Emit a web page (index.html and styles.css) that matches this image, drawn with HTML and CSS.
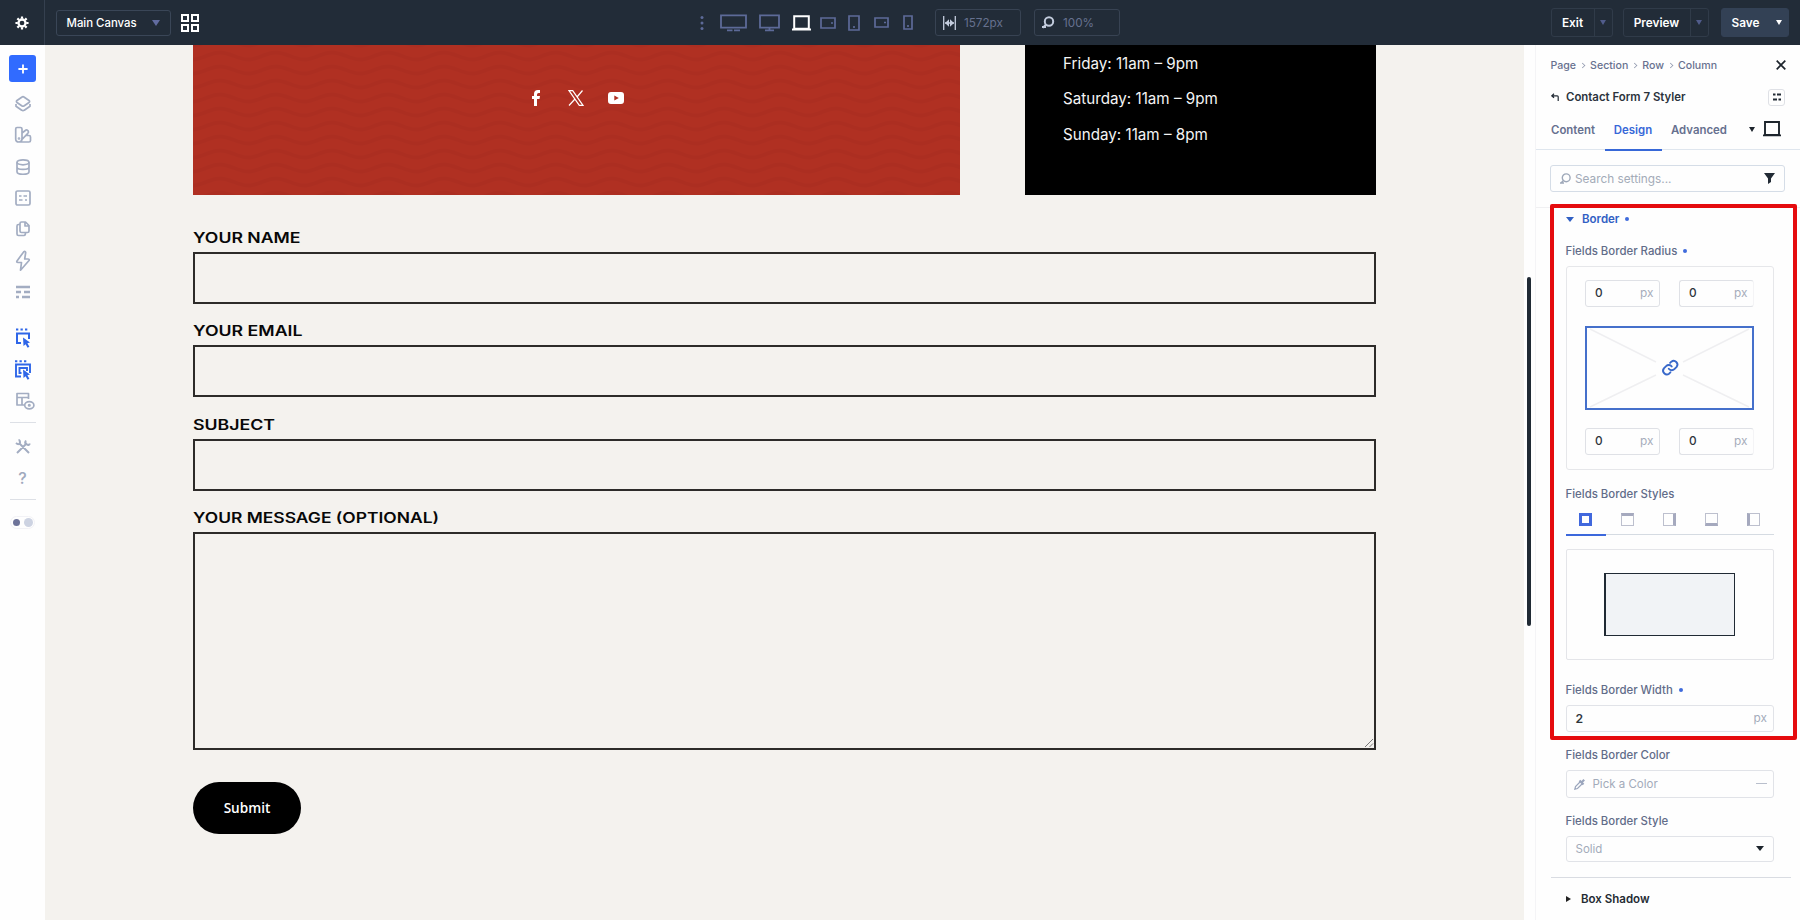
FILE: index.html
```html
<!DOCTYPE html>
<html lang="en">
<head>
<meta charset="utf-8">
<title>Contact Form 7 Styler</title>
<link rel="stylesheet" href="styles.css">
</head>
<body>
<div class="app">
<header class="topbar">
  <div class="gear"><svg width="14" height="14" viewBox="0 0 16 16"><circle cx="8" cy="8" r="4" fill="none" stroke="#fff" stroke-width="2.6"/><path d="M8 .5v2.700M8 12.800v2.700M.5 8h2.700M12.800 8h2.700M2.700 2.700l1.900 1.900M11.400 11.400l1.900 1.900M13.300 2.700l-1.900 1.900M4.600 11.400l-1.900 1.900" stroke="#fff" stroke-width="2.500"/></svg></div>
  <div class="canvas-select"><span>Main Canvas</span><i class="tri tri-dim"></i></div>
  <svg class="grid-icon" width="18" height="18" viewBox="0 0 18 18" fill="none" stroke="#fff" stroke-width="2"><path d="M1 1h6v6H1zM11 1h6v6h-6zM1 11h6v6H1zM11 11h6v6h-6z"/></svg>
  <div class="devices">
    <svg width="4" height="16" viewBox="0 0 4 16" fill="#5d6a98"><circle cx="2" cy="2.5" r="1.5"/><circle cx="2" cy="8" r="1.5"/><circle cx="2" cy="13.5" r="1.5"/></svg>
    <svg class="d1" width="27" height="18" viewBox="0 0 27 18" fill="none" stroke="#5d6a98" stroke-width="1.8"><path d="M1 1.4h25v12.200H1zM7 16.400h5.500M14 16.400h6"/></svg>
    <svg class="d2" width="21" height="18" viewBox="0 0 21 18" fill="none" stroke="#5d6a98" stroke-width="1.8"><path d="M1 1.400h19v12.200H1zM6 16.400h9M10.500 13v3"/></svg>
    <svg class="d3" width="19" height="18" viewBox="0 0 19 18" fill="none" stroke="#fff" stroke-width="2"><path d="M2.200 2.200h14.600v12.500H2.200zM0 15.600h19"/></svg>
    <svg class="d4" width="16" height="12" viewBox="0 0 16 12" fill="none" stroke="#5d6a98" stroke-width="1.700"><path d="M1 1h14v10H1z"/><path d="M11 6h2"/></svg>
    <svg class="d5" width="12" height="16" viewBox="0 0 12 16" fill="none" stroke="#5d6a98" stroke-width="1.700"><path d="M1 1h10v14H1z"/><path d="M6 11v2"/></svg>
    <svg class="d6" width="15" height="11" viewBox="0 0 15 11" fill="none" stroke="#5d6a98" stroke-width="1.700"><path d="M1 1h13v9H1z"/><path d="M10 5.500h2"/></svg>
    <svg class="d7" width="10" height="15" viewBox="0 0 10 15" fill="none" stroke="#5d6a98" stroke-width="1.700"><path d="M1 1h8v13H1z"/><path d="M5 10v2"/></svg>
  </div>
  <div class="metric"><svg width="13" height="14" viewBox="0 0 13 14" stroke="#c3ccdd" fill="none" stroke-width="1.300"><path d="M.7 0v14M12.300 0v14M2 7h9"/><path d="M2 7l4-3.800v7.600zM11 7L7 3.200v7.600z" fill="#c3ccdd" stroke="none"/></svg><span>1572px</span></div>
  <div class="metric zoom"><svg width="13" height="13" viewBox="0 0 13 13" stroke="#c3ccdd" fill="none" stroke-width="2"><circle cx="7" cy="5.500" r="4.200"/><path d="M4 8.500L1 11.700M0 11h4"/></svg><span>100%</span></div>
  <div class="actions">
    <div class="btn exit"><span>Exit</span><b><i class="tri tri-sm"></i></b></div>
    <div class="btn preview"><span>Preview</span><b><i class="tri tri-sm"></i></b></div>
    <div class="btn save"><span>Save</span><b><i class="tri tri-sm"></i></b></div>
  </div>
</header>
<nav class="sidebar">
  <div class="add"><svg width="10" height="10" viewBox="0 0 10 10"><path d="M5 0.400v9.200M.4 5h9.200" stroke="#fff" stroke-width="1.800"/></svg></div>
  <div class="tool"><svg width="18" height="18" viewBox="0 0 18 18"><path d="M9 1.700Q9.600 1.700 10.300 2.200L15 5.500Q16.200 6.500 15 7.500L10.300 10.700Q9 11.500 7.700 10.700L3 7.500Q1.800 6.500 3 5.500L7.700 2.200Q8.400 1.700 9 1.700zM2 9v2.200L7.700 15.200Q9 16.200 10.300 15.200L16 11.200V9"/></svg></div>
  <div class="tool"><svg width="18" height="18" viewBox="0 0 18 18"><path d="M3 1.500h3.500Q8 1.500 8 3v9.500Q8 16 5 16 1.700 16 1.700 13V3Q1.700 1.500 3 1.500zM8 7l4-3q1.300-.5 2.200 1 .8 1.300-.4 2.300L7 14.500M11.500 9.500H15q1.500 0 1.500 1.600V14.500q0 1.500-1.500 1.500H5"/><circle cx="5" cy="12.500" r=".5"/></svg></div>
  <div class="tool"><svg width="18" height="18" viewBox="0 0 18 18"><ellipse cx="9" cy="4.300" rx="6" ry="2.500"/><path d="M3 4.300v9.400c0 3.400 12 3.400 12 0V4.300M3 9c0 3.200 12 3.200 12 0"/></svg></div>
  <div class="tool"><svg width="18" height="18" viewBox="0 0 18 18"><rect x="2" y="2" width="14" height="14" rx="1.500"/><path d="M5 7h2.500M9.500 7H13M5 11h3.500M11 11h2"/></svg></div>
  <div class="tool"><svg width="18" height="18" viewBox="0 0 18 18"><path d="M7.500 2h4L15 5.500V11q0 1.500-1.500 1.500h-6Q6 12.500 6 11V3.500Q6 2 7.500 2zM11 2v4h4M6 4.500H4.500Q3 4.500 3 6v8q0 1.500 1.500 1.500h5.500q1.500 0 1.500-3"/></svg></div>
  <div class="tool"><svg width="18" height="22" viewBox="0 0 18 22"><path d="M9.800 1.700L3 11q-.8 1.500 1 1.500h3.500L6.500 20.200 15 10.500q.8-1.500-1-1.500h-3.300l1-6.500q-.5-1.600-1.900-.8z"/></svg></div>
  <div class="tool"><svg width="14" height="14" viewBox="0 0 14 14"><path stroke-width="2.600" d="M0 2h14M0 7h5M8 7h6M0 12h3M6 12h8"/></svg></div>
  <div class="tool blue first"><svg width="18" height="20" viewBox="0 0 18 20"><path stroke-width="2" d="M2 1.500h2.300M6.500 1.500h2.300M11 1.500h2.300M7 15H3V5.500h12V11"/><path stroke="none" fill="#2f66e8" d="M9 9.500l7 5-2.600.8 2 3.500-1.800 1-2-3.600L9.500 18z"/></svg></div>
  <div class="tool blue"><svg width="18" height="20" viewBox="0 0 18 20"><path stroke-width="1.900" d="M1 1.200h2.300M5.500 1.200h2.300M10 1.200h2.300M7 16.500H2V4.500h14V13M7.500 13H5.500V8h7.500v3"/><path stroke="none" fill="#2f66e8" d="M9 9.500l7 5-2.600.8 2 3.500-1.800 1-2-3.600L9.500 18z"/></svg></div>
  <div class="tool wire"><svg width="20" height="18" viewBox="0 0 20 18"><path d="M9 13H2V1.500h11.500V7M2 5.500h11.500M7 5.500V13"/><ellipse cx="14.300" cy="13.200" rx="4.600" ry="3.600"/><circle cx="14.300" cy="13.200" r=".7"/></svg></div>
  <hr class="rule">
  <div class="tool tools"><svg width="16" height="16" viewBox="0 0 16 16"><path stroke-width="2" d="M2 14L12 4M4.500 4.500L14 14M11 1.500q-2 3 .5 3.700Q14 7 14.800 4.500M1 4q3 2.500 4-.5Q5 1 3.500 1"/></svg></div>
  <div class="tool help">?</div>
  <hr class="rule">
  <div class="toggle"><i></i><i></i></div>
</nav>
<main class="stage">
  <section class="hero">
    <div class="social">
      <svg class="waves" width="767" height="150"><defs><pattern id="wave" x="13" y="4" width="56" height="14" patternUnits="userSpaceOnUse"><path d="M-14-3.500C-4-3.500 4-10.500 14-10.500S32-3.500 42-3.500 60-10.500 70-10.500M-14 10.500C-4 10.500 4 3.500 14 3.500S32 10.500 42 10.500 60 3.500 70 3.500M-14 24.500C-4 24.500 4 17.500 14 17.500S32 24.500 42 24.500 60 17.500 70 17.500" fill="none" stroke="#a52c20" stroke-width="4"/></pattern></defs><rect width="767" height="150" fill="url(#wave)" opacity=".38"/></svg>
      <div class="socials">
        <svg width="16" height="16" viewBox="0 0 16 16"><path fill="#fff" d="M6 16V9H4V6h2V4q0-4 4-4h2v3h-1.500Q9 3 9 4.500V6h3l-.5 3H9v7z"/></svg>
        <svg width="16" height="16" viewBox="0 0 16 16" fill="none" stroke="#fff" stroke-width="1.200"><path d="M1 .7h3.700L15 15.300h-3.700zM14.500.5L9 7M7 9l-6 6.500"/></svg>
        <svg width="16" height="16" viewBox="0 0 16 16"><path fill="#fff" fill-rule="evenodd" d="M3 2h10q3 0 3 3v6q0 3-3 3H3q-3 0-3-3V5q0-3 3-3zm3.300 3.500v5L10.800 8z"/></svg>
      </div>
    </div>
    <div class="hours"><p>Friday: 11am – 9pm</p><p>Saturday: 11am – 9pm</p><p>Sunday: 11am – 8pm</p></div>
  </section>
  <form class="form">
    <label class="field"><svg class="cap" width="300" height="18"><text x="0" y="13.200" textLength="107.500" lengthAdjust="spacingAndGlyphs">YOUR NAME</text></svg><span class="input"></span></label>
    <label class="field"><svg class="cap" width="300" height="18"><text x="0" y="13.200" textLength="109.500" lengthAdjust="spacingAndGlyphs">YOUR EMAIL</text></svg><span class="input"></span></label>
    <label class="field"><svg class="cap" width="300" height="18"><text x="0" y="13.200" textLength="82" lengthAdjust="spacingAndGlyphs">SUBJECT</text></svg><span class="input"></span></label>
    <label class="field"><svg class="cap" width="300" height="18"><text x="0" y="13.200" textLength="246" lengthAdjust="spacingAndGlyphs">YOUR MESSAGE (OPTIONAL)</text></svg><span class="input area"><svg width="10" height="10" viewBox="0 0 10 10" stroke="#777" fill="none"><path d="M1 9l8-8M5.500 9L9 5.500"/></svg></span></label>
    <div class="submit">Submit</div>
  </form>
</main>
<aside class="panel">
  <div class="scroll"></div>
  <div class="inner">
    <div class="crumbs"><span>Page</span><em></em><span>Section</span><em></em><span>Row</span><em></em><span>Column</span><svg class="close" width="10" height="10" viewBox="0 0 10 10"><path d="M.7.7l8.600 8.600M9.300.7L.7 9.300" stroke="#1d242c" stroke-width="1.700"/></svg></div>
    <div class="title"><svg width="9" height="9" viewBox="0 0 9 9"><path d="M3 .8L.8 2.800 3 4.800M1 2.800h5.200q1 0 1 1V8" fill="none" stroke="#222b35" stroke-width="1.200"/></svg><span>Contact Form 7 Styler</span><div class="preset"><svg width="8" height="8" viewBox="0 0 8 8"><path d="M0 1.500h2.500M4 1.500h4M0 6.500h4M5.500 6.500H8" stroke="#222b35" stroke-width="1.800"/></svg></div></div>
    <div class="tabs"><span class="t1">Content</span><span class="t2">Design</span><span class="t3">Advanced</span><i class="tri dark"></i><svg width="18" height="16" viewBox="0 0 18 16" fill="none" stroke="#1d242c" stroke-width="1.900"><path d="M2 1h14v13H2zM0 14.400h18"/></svg></div>
    <div class="search"><svg width="11" height="11" viewBox="0 0 11 11" fill="none" stroke="#9ea8b9" stroke-width="1.400"><circle cx="6.200" cy="4.800" r="3.900"/><path d="M3.500 7.500L.7 10.300M0 10h4"/></svg><span>Search settings...</span><svg class="funnel" width="11" height="11" viewBox="0 0 11 11"><path d="M0 0h11L7 5.500V9L4 11V5.500z" fill="#222b35"/></svg></div>
    <div class="group">
      <div class="head"><i class="tri bluetri"></i><span>Border</span><u></u></div>
      <div class="lab l1">Fields Border Radius<u></u></div>
      <div class="radius">
        <div class="pair"><div class="num"><b>0</b><span>px</span></div><div class="num right"><b>0</b><span>px</span></div></div>
        <div class="link"><svg width="165" height="80" viewBox="0 0 165 80" fill="none"><path d="M3 1l66 33M162 1L96 34M3 79l66-32M162 79L96 47" stroke="#efeff1" stroke-width="1.400"/><g stroke="#3868ca" stroke-width="2.500" stroke-linecap="round" transform="translate(75 31) scale(.75)"><path d="M9 13a5 5 0 0 0 7.500.5l3-3a5 5 0 0 0-7-7l-1.700 1.700M13 10a5 5 0 0 0-7.500-.5l-3 3a5 5 0 0 0 7 7l1.700-1.700"/></g></svg></div>
        <div class="pair"><div class="num"><b>0</b><span>px</span></div><div class="num right"><b>0</b><span>px</span></div></div>
      </div>
      <div class="lab l2">Fields Border Styles</div>
      <div class="sides">
        <span class="on"><i class="all"></i></span><span><i class="top"></i></span><span><i class="rgt"></i></span><span><i class="bot"></i></span><span><i class="lft"></i></span>
      </div>
      <div class="swatch"><div></div></div>
      <div class="lab l3">Fields Border Width<u></u></div>
      <div class="row w"><b>2</b><span>px</span></div>
      <div class="lab l4">Fields Border Color</div>
      <div class="row c"><svg width="12" height="12" viewBox="0 0 12 12" fill="none" stroke="#9ba6bd" stroke-width="1.200"><path d="M6.500 3.500L1.500 8.500.8 11.200l2.700-.7 5-5"/><path d="M5.500 2.500l4 4M8 4l2.200-2.200" stroke-width="2.200"/></svg><em>Pick a Color</em><i class="dash"></i></div>
      <div class="lab l5">Fields Border Style</div>
      <div class="row s"><em>Solid</em><i class="tri dark big"></i></div>
    </div>
    <div class="head shadow"><i class="rtri"></i><span>Box Shadow</span></div>
  </div>
  <div class="callout"></div>
</aside>
</div>
</body>
</html>
```
FILE: styles.css
```css
* { box-sizing: border-box; }
body { margin: 0; font-family: Inter, "Liberation Sans", sans-serif; font-size: 12px; }
svg { display: block; flex: none; }
p { margin: 0; }
i, em { font-style: normal; }
u { text-decoration: none; }
.app { width: 1800px; height: 920px; overflow: hidden; display: grid; grid-template: 45px 875px / 45px 1479px 276px; background: #fefefe; }

.topbar { grid-column: 1 / 4; background: #222c38; display: flex; align-items: center; color: #fff; font-weight: 600; }
.gear { width: 45px; height: 45px; display: flex; align-items: center; justify-content: center; border-right: 1px solid #35404f; }
.canvas-select { width: 115px; height: 26px; margin-left: 11px; padding: 0 10px 0 9.500px; border: 1px solid #3a4657; border-radius: 3px; display: flex; align-items: center; justify-content: space-between; font-size: 11.400px; font-weight: 500; }
.grid-icon { margin-left: 10px; }
.tri { width: 0; height: 0; border: 4px solid transparent; border-top: 6px solid #fff; border-bottom: 0; flex: none; }
.tri-dim { border-top-color: #626ca0; }
.tri-sm { border-width: 5px 3px 0; }
.devices { display: flex; align-items: center; width: 213px; margin-left: 501px; }
.d1 { margin-left: 16px; } .d2 { margin-left: 12px; } .d3 { margin-left: 12px; } .d4 { margin-left: 9px; }
.d5 { margin-left: 12px; } .d6 { margin-left: 14px; } .d7 { margin-left: 14px; }
.metric { width: 86px; height: 27px; border: 1px solid #384353; border-radius: 3px; display: flex; align-items: center; gap: 8px; padding-left: 7px; color: #66718f; font-weight: 400; font-size: 11.700px; margin-left: 22px; }
.zoom { margin-left: 13px; }
.actions { display: flex; margin-left: auto; padding-right: 11.500px; font-size: 11.800px; }
.btn { height: 29px; display: flex; border: 1px solid #303b49; border-radius: 3px; line-height: 28px; }
.btn span { flex: 1; text-align: center; }
.btn b { display: flex; align-items: center; justify-content: center; width: 18px; border-left: 1px solid #303b49; }
.btn b i { border-top-color: #515c8b; }
.exit { width: 62px; }
.preview { width: 86px; margin-left: 10px; }
.save { width: 68px; margin-left: 12px; background: #334155; border-color: #334155; }
.save b { border: 0; }
.save b i { border-top-color: #fff; }

.sidebar { background: #fefefe; display: flex; flex-direction: column; align-items: center; padding-top: 10px; }
.add { width: 27px; height: 27px; border-radius: 3px; background: #316bff; display: flex; align-items: center; justify-content: center; margin-bottom: 6.500px; }
.tool { height: 31.300px; width: 45px; flex: none; display: flex; align-items: center; justify-content: center; color: #a0a9bd; }
.tool svg { fill: none; stroke: #a3adc2; stroke-width: 1.700; stroke-linejoin: round; }
.tool.blue svg { stroke: #2f66e8; stroke-linejoin: miter; }
.first { margin-top: 15px; }
.wire { padding-left: 4px; }
.rule { width: 26px; height: 1px; border: 0; margin: 5.500px 0 8px; background: #dde0e6; }
.help { font-size: 16px; font-weight: 500; }
.toggle { margin-top: 7.500px; width: 25px; height: 13px; border: 1px solid #f2f2f6; border-radius: 7px; display: flex; align-items: center; justify-content: space-between; padding: 0 1px 0 2px; }
.toggle i { width: 7px; height: 7px; border-radius: 50%; background: #6d7399; }
.toggle i + i { width: 9px; height: 9px; background: #cdd3e2; }

.stage { background: #f4f2ee; padding-left: 148px; }
.hero { display: flex; gap: 65px; height: 150px; }
.social { width: 767px; background: #b03022; position: relative; }
.waves { position: absolute; inset: 0; }
.socials { position: relative; display: flex; gap: 24px; justify-content: center; padding: 45px 1px 0 0; }
.hours { width: 351px; background: #000; color: #f4f4f4; padding: 1px 0 0 38px; font-size: 15.200px; line-height: 35.300px; }
.form { padding-top: 35px; }
.field { display: block; height: 93.330px; }
.field:nth-child(4) { height: 272.500px; }
.cap { height: 22px; overflow: visible; font-weight: 600; font-size: 14px; fill: #080808; }
.input { display: block; width: 1183px; height: 52px; border: 2px solid #2d2b29; }
.area { height: 218px; display: flex; align-items: flex-end; justify-content: flex-end; }
.submit { width: 108px; height: 52px; border-radius: 26px; background: #000; color: #fff; font: 600 13.600px/51px "Open Sans", sans-serif; text-align: center; }

.panel { position: relative; display: flex; background: #fefefe; }
.scroll { width: 4px; height: 349px; margin: 232px 4px 0 3px; border-radius: 2px; background: #202a34; flex: none; }
.inner { width: 265px; border-left: 1px solid #f4f4f6; }
.crumbs { height: 40px; padding: 0 14px 0 14.500px; display: flex; align-items: center; color: #68718f; font-weight: 500; font-size: 10.600px; }
.crumbs em { width: 5px; height: 5px; border: 1px solid #8d95ab; border-width: 1px 1px 0 0; transform: rotate(45deg) scale(.8); margin: 0 5px 0 4px; }
.close { margin-left: auto; }
.title { height: 24px; padding: 0 15px; display: flex; align-items: center; color: #2b333c; font-weight: 600; font-size: 11.400px; }
.title span { margin-left: 6px; }
.preset { margin-left: auto; width: 17px; height: 17px; border: 1px solid #dfe1e6; border-radius: 3px; display: flex; align-items: center; justify-content: center; }
.tabs { height: 41px; border-bottom: 1px solid #dfe6ee; display: flex; align-items: center; color: #66708f; font-weight: 600; font-size: 11.400px; padding-left: 15px; }
.tabs span { height: 43px; line-height: 45px; }
.t2 { color: #3768d8; border-bottom: 2px solid #3768d8; width: 57px; text-align: center; margin: 1px 9.500px 0 9.500px; }
.t1 { width: 44px; } .t3 { width: 56px; }
.dark { border-top-color: #1d242c; border-width: 5px 3.500px 0; margin: 0 8px 0 22px; }
.search { margin: 15px 15px 15px 14px; height: 27px; border: 1px solid #d5dde7; border-radius: 3px; display: flex; align-items: center; gap: 4px; padding: 0 9px; color: #a3abb8; font-size: 11.800px; }
.funnel { margin-left: auto; }
.group { border-top: 1px solid #f0f0f2; padding: 0 26.500px 0 29.500px; height: 670px; }
.head { height: 22px; display: flex; align-items: center; gap: 8.500px; color: #3160c4; font-weight: 600; font-size: 11.500px; }
.head u, .lab u { width: 4px; height: 4px; border-radius: 50%; background: #3f6bdc; margin-left: 6px; }
.head u { margin-left: -2.500px; }
.bluetri { border-top-color: #3160c4; border-width: 5px 4px 0; }
.lab { display: flex; align-items: center; color: #626c89; font-weight: 500; font-size: 11.400px; height: 20px; }
.l1 { margin-top: 10.500px; }
.radius { margin-top: 5px; height: 204px; border: 1px solid #e6e7ea; border-radius: 3px; padding: 13px 18.500px; }
.pair { display: flex; justify-content: space-between; }
.num { width: 75px; height: 27px; border: 1px solid #dfe1e6; border-radius: 3px; display: flex; align-items: center; justify-content: space-between; padding: 0 5.500px 0 9px; color: #a6adbb; font-size: 11.800px; }
.num b, .row b { color: #2f363d; font-weight: 500; }
.right { border-right-color: #f4f4f6; }
.link { height: 84px; margin: 19px 0 18px; border: 2px solid #4570cb; }
.l2 { margin-top: 14px; }
.sides { display: flex; justify-content: space-between; height: 31px; border-bottom: 1px solid #d5dbe2; }
.sides span { width: 40px; height: 32px; padding-top: 2px; display: flex; align-items: center; justify-content: center; border-bottom: 2px solid transparent; }
.sides .on { border-color: #3c68dc; }
.sides i { width: 13px; height: 13px; border: 1px solid #bdc0ce; }
.sides .all { border: 3px solid #4168dd; }
.sides .top { border-top: 3px solid #a5a9be; } .sides .rgt { border-right: 3px solid #a5a9be; }
.sides .bot { border-bottom: 3px solid #a5a9be; } .sides .lft { border-left: 3px solid #a5a9be; }
.swatch { margin-top: 14px; height: 111px; border: 1px solid #e4e5e9; border-radius: 2px; display: flex; align-items: center; justify-content: center; }
.swatch div { width: 131px; height: 63px; border: 1px solid #202a34; border-left-width: 2px; background: #f1f3f6; }
.l3 { margin-top: 20px; }
.row { height: 27px; border: 1px solid #e1e3e8; border-radius: 3px; display: flex; align-items: center; padding: 0 5.500px 0 9px; color: #a3abba; font-size: 11.500px; }
.row span { margin-left: auto; font-size: 11.800px; }
.w { margin-top: 5px; }
.w b { font-size: 12.200px; font-weight: 600; }
.l4 { margin-top: 13px; }
.c { height: 28px; margin-top: 5px; padding-left: 7.500px; }
.c em { margin-left: 6.500px; }
.dash { width: 11px; height: 1px; background: #b9bfcc; margin-left: auto; }
.l5 { margin-top: 13px; }
.s { height: 26px; margin-top: 5px; }
.big { margin: 0 3px 0 auto; border-width: 5px 4px 0; }
.shadow { margin-left: 15px; padding-left: 15px; width: 240px; border-top: 1px solid #d9dce2; height: 42px; color: #242b33; gap: 10px; }
.rtri { border: 3.500px solid transparent; border-left: 5px solid #222; border-right: 0; }
.callout { position: absolute; left: 26px; top: 158.500px; width: 247px; height: 536px; border: 4px solid #e50b0e; border-radius: 2px; pointer-events: none; }
```
